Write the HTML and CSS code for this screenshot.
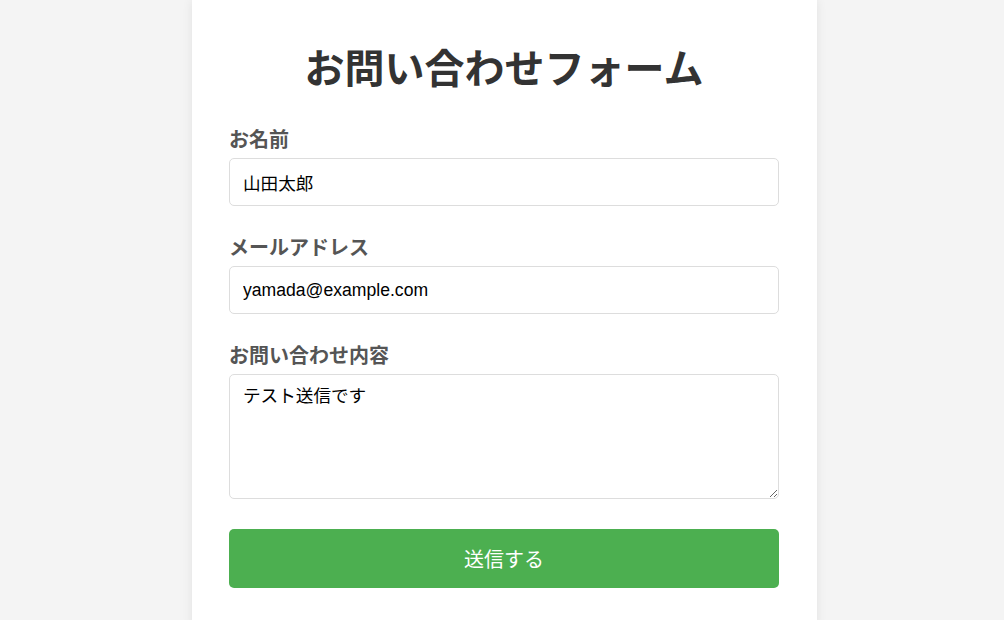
FILE: index.html
```html
<!DOCTYPE html>
<html lang="ja">
<head>
<meta charset="utf-8">
<title>お問い合わせフォーム</title>
<link rel="stylesheet" href="styles.css">
</head>
<body>
<div class="page">
  <main class="card">
    <h1 class="title">お問い合わせフォーム</h1>
    <form class="form">
      <div class="field">
        <label class="label" for="name">お名前</label>
        <input class="input" id="name" type="text" value="山田太郎">
      </div>
      <div class="field">
        <label class="label" for="email">メールアドレス</label>
        <input class="input" id="email" type="email" value="yamada@example.com">
      </div>
      <div class="field">
        <label class="label" for="msg">お問い合わせ内容</label>
        <textarea class="input textarea" id="msg">テスト送信です</textarea>
      </div>
      <button class="submit" type="button">送信する</button>
    </form>
  </main>
</div>
</body>
</html>
```

FILE: styles.css
```css
html, body {
  margin: 0;
  padding: 0;
  background: #f4f4f4;
  font-family: "Liberation Sans", "Noto Sans CJK JP", sans-serif;
  color: #333;
}
.page {
  display: flex;
  justify-content: center;
  padding-left: 5px;
  min-height: 620px;
}
.card {
  width: 625px;
  box-sizing: border-box;
  background: #fff;
  padding: 40px 38px 40px 37px;
  box-shadow: 0 0 10px rgba(0, 0, 0, 0.08);
}
.title {
  margin: 0 0 27px;
  font-size: 40px;
  line-height: 58px;
  font-weight: bold;
  text-align: center;
  color: #333;
}
.form {
  display: flex;
  flex-direction: column;
}
.field {
  display: flex;
  flex-direction: column;
  margin-bottom: 27px;
}
.label {
  font-size: 20px;
  font-weight: bold;
  color: #555;
  line-height: 30px;
  margin-bottom: 3px;
}
.input {
  box-sizing: border-box;
  width: 550px;
  height: 48px;
  padding: 12px 13px;
  border: 1px solid #ddd;
  border-radius: 5px;
  font-family: "Liberation Sans", "Noto Sans CJK JP", sans-serif;
  font-size: 17.6px;
  line-height: 22px;
  color: #000;
  background: #fff;
  margin: 0;
}
.textarea {
  height: 125px;
  resize: vertical;
  padding-top: 10px;
}
.submit {
  margin-top: 3px;
  height: 59px;
  width: 550px;
  border: none;
  border-radius: 5px;
  background: #4caf50;
  color: #fff;
  font-family: "Liberation Sans", "Noto Sans CJK JP", sans-serif;
  font-size: 20px;
}
```
